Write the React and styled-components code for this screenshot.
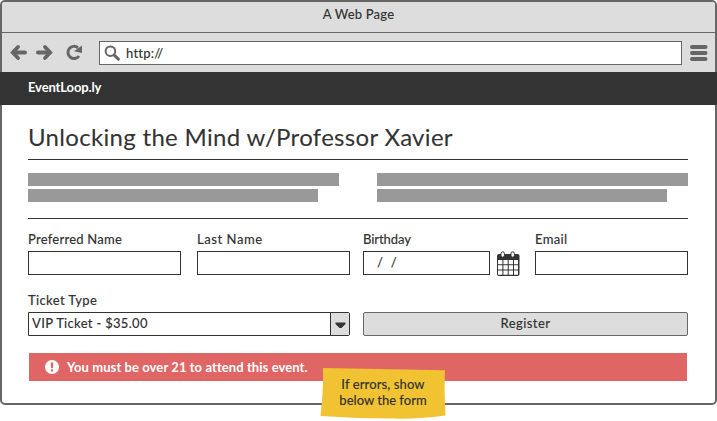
import React from "react";
import styled, { createGlobalStyle } from "styled-components";

const Global = createGlobalStyle`
  * { box-sizing: border-box; }
  body { margin: 0; background: #fff; }
`;

const Stage = styled.div`
  position: relative;
  width: 717px;
  height: 421px;
  overflow: hidden;
  color: #333;
  font: 500 13px/16px Lato, "Open Sans", sans-serif;
  -webkit-text-stroke: 0.08px currentColor;
`;

const Browser = styled.div`
  height: 405px;
  border: 2px solid #666;
  border-radius: 5px;
  background: #fff;
`;

const Text = styled.span`
  display: block;
  white-space: pre;
  letter-spacing: ${(p) => p.$spacing || 0}px;
`;

const TitleBar = styled.header`
  display: flex;
  justify-content: center;
  height: 31px;
  padding-top: 4px;
  border-bottom: 1px solid #666;
  border-radius: 3px 3px 0 0;
  background: #ddd;
`;

const Toolbar = styled.div`
  display: flex;
  align-items: flex-start;
  height: 39px;
  padding: 8px 6px 0 7px;
  background: #ddd;
`;

const Navigation = styled.svg`
  width: 90px;
  height: 24px;
  flex: none;
`;

const AddressBar = styled.div`
  display: flex;
  align-items: center;
  width: 583px;
  height: 24px;
  gap: 5px;
  padding-left: 4px;
  border: 1px solid #666;
  background: #fff;
`;

const MenuIcon = styled.svg`
  width: 19px;
  height: 24px;
  margin-left: 7px;
  flex: none;
`;

const SiteBar = styled.div`
  height: 33px;
  margin: 0 -2px;
  padding: 7px 28px;
  background: #333;
  color: #fff;
  font-weight: 700;
  -webkit-text-stroke: 0;
`;

const Page = styled.main`
  padding: 0 27px 0 26px;
`;

const Heading = styled.h1`
  height: 54px;
  margin: 0;
  padding-top: 17px;
  font-size: 24px;
  line-height: 30px;
  font-weight: 400;
  letter-spacing: 0.31px;
  white-space: nowrap;
`;

const Rule = styled.hr`
  height: 1px;
  margin: 0;
  border: 0;
  background: #333;
`;

const Summary = styled.div`
  display: grid;
  grid-template-columns: 311px 311px;
  column-gap: 38px;
  height: 58px;
  padding-top: 13px;
`;

const Paragraph = styled.div`
  display: flex;
  flex-direction: column;
  gap: 3px;
`;

const Line = styled.div`
  width: ${(p) => p.$width}px;
  height: 13px;
  background: #999;
`;

const FieldRow = styled.div`
  display: flex;
  margin-top: ${(p) => p.$top}px;
`;

const Field = styled.div`
  width: ${(p) => p.$width}px;
  margin-right: ${(p) => p.$after || 0}px;
  flex: none;
`;

const Label = styled(Text)`
  height: 20px;
`;

const Input = styled.div`
  height: 24px;
  padding: 2px 13px;
  border: 1px solid #333;
`;

const CalendarIcon = styled.svg`
  width: 24px;
  height: 26px;
  margin: 20px 15px 0 0;
  flex: none;
`;

const Select = styled.div`
  display: flex;
  justify-content: space-between;
  height: 24px;
  padding-left: 3px;
  border: 1px solid #333;
  border-radius: 0 2px 2px 0;
`;

const SelectValue = styled(Text)`
  padding-top: 2px;
`;

const Arrow = styled.span`
  display: flex;
  align-items: center;
  justify-content: center;
  width: 19px;
  padding-top: 2px;
  border-left: 1px solid #333;
  background: #ddd;
`;

const Button = styled.div`
  display: flex;
  justify-content: center;
  width: 325px;
  height: 24px;
  margin-top: 20px;
  padding-top: 2px;
  border: 1px solid #666;
  border-radius: 2px;
  background: #ddd;
`;

const Alert = styled.div`
  display: flex;
  align-items: center;
  gap: 8px;
  width: 658px;
  height: 28px;
  margin: 17px 0 0 1px;
  padding-left: 16px;
  background: #e06666;
  color: #fff;
  font-weight: 700;
  -webkit-text-stroke: 0;
`;

const Note = styled.aside`
  position: absolute;
  left: 320px;
  top: 367px;
  width: 126px;
  height: 53px;
`;

const NotePaper = styled.svg`
  position: absolute;
  inset: 0;
`;

const NoteText = styled.div`
  position: relative;
  display: flex;
  flex-direction: column;
  align-items: center;
  padding-top: 9px;
`;

const SearchIcon = () => (
  <svg width="17" height="17" viewBox="0 0 17 17" fill="none" stroke="#666">
    <circle cx="6.4" cy="6.2" r="4.8" strokeWidth="2" />
    <path d="M10.2 10.1 L14.4 14.1" strokeWidth="3" strokeLinecap="round" />
  </svg>
);

const Calendar = () => (
  <CalendarIcon viewBox="0 0 24 26">
    <rect x="1" y="3" width="22.5" height="22" rx="2" fill="#333" />
    <path
      d="M2 9h4.4v4.2h-4.4zM7.4 9h4.3v4.2h-4.3zM12.7 9h4.3v4.2h-4.3zM18 9h4v4.2h-4zM2 14.2h4.4v4.2h-4.4zM7.4 14.2h4.3v4.2h-4.3zM12.7 14.2h4.3v4.2h-4.3zM18 14.2h4v4.2h-4zM2 19.4h4.4v4.4h-4.4zM7.4 19.4h4.3v4.4h-4.3zM12.7 19.4h4.3v4.4h-4.3zM18 19.4h4v4.4h-4z"
      fill="#fff"
    />
    <rect x="5" y="0.8" width="3.4" height="5.4" rx="1.7" fill="#fff" stroke="#333" />
    <rect x="15" y="0.8" width="3.4" height="5.4" rx="1.7" fill="#fff" stroke="#333" />
  </CalendarIcon>
);

export default function App() {
  return (
    <>
      <Global />
      <Stage>
        <Browser>
          <TitleBar>
            <Text $spacing={0.2}>A Web Page</Text>
          </TitleBar>
          <Toolbar>
            <Navigation viewBox="0 0 90 24" fill="none" stroke="#666">
              <path d="M5 11.5H16" strokeWidth="4" strokeLinecap="round" />
              <path d="M9 6L3.8 11.5L9 17" strokeWidth="3.8" strokeLinecap="round" />
              <path d="M29 11.5H40" strokeWidth="4" strokeLinecap="round" />
              <path d="M36 6L41.2 11.5L36 17" strokeWidth="3.8" strokeLinecap="round" />
              <path d="M69 6.8A6.1 6.1 0 1 0 70 15" strokeWidth="3" />
              <path d="M73 4.5V12L65 10.2Z" fill="#666" stroke="none" />
            </Navigation>
            <AddressBar>
              <SearchIcon />
              <Text $spacing={0.2}>http://</Text>
            </AddressBar>
            <MenuIcon viewBox="0 0 19 24" stroke="#666" strokeWidth="4" strokeLinecap="round">
              <path d="M3 6H16.5M3 12H16.5M3 18H16.5" />
            </MenuIcon>
          </Toolbar>
          <SiteBar>
            <Text $spacing={-0.13}>EventLoop.ly</Text>
          </SiteBar>
          <Page>
            <Heading>Unlocking the Mind w/Professor Xavier</Heading>
            <Rule />
            <Summary>
              <Paragraph>
                <Line $width={311} />
                <Line $width={290} />
              </Paragraph>
              <Paragraph>
                <Line $width={311} />
                <Line $width={290} />
              </Paragraph>
            </Summary>
            <Rule />
            <FieldRow $top={12}>
              <Field $width={153} $after={16}>
                <Label $spacing={0.22}>Preferred Name</Label>
                <Input />
              </Field>
              <Field $width={153} $after={13}>
                <Label $spacing={0.55}>Last Name</Label>
                <Input />
              </Field>
              <Field $width={127} $after={6}>
                <Label $spacing={-0.1}>Birthday</Label>
                <Input><Text $spacing={0.4}>/  /</Text></Input>
              </Field>
              <Calendar />
              <Field $width={153}>
                <Label $spacing={0.3}>Email</Label>
                <Input />
              </Field>
            </FieldRow>
            <FieldRow $top={15}>
              <Field $width={322} $after={13}>
                <Label $spacing={0.35}>Ticket Type</Label>
                <Select>
                  <SelectValue $spacing={0.3}>VIP Ticket - $35.00</SelectValue>
                  <Arrow>
                    <svg width="11" height="7" viewBox="0 0 11 7">
                      <path d="M0.5 0.5H10.5V2L6.5 6H4.5L0.5 2Z" fill="#333" />
                    </svg>
                  </Arrow>
                </Select>
              </Field>
              <Button><Text $spacing={0.4}>Register</Text></Button>
            </FieldRow>
            <Alert>
              <svg width="14" height="14" viewBox="0 0 14 14">
                <circle cx="7" cy="7" r="7" fill="#fff" />
                <path d="M5.7 2.5H8.3L7.9 8.3H6.1Z" fill="#e06666" />
                <rect x="5.8" y="9.3" width="2.4" height="2.3" rx="0.7" fill="#e06666" />
              </svg>
              <Text $spacing={0.08}>You must be over 21 to attend this event.</Text>
            </Alert>
          </Page>
        </Browser>
        <Note>
          <NotePaper width="126" height="53" viewBox="0 0 126 53">
            <path
              d="M3 1L125 3.3Q124 24 125.5 48.5Q104 52 74 51.6Q38 51.5 0.5 49Q3.6 22 3 1Z"
              fill="#f1c232"
            />
          </NotePaper>
          <NoteText>
            <Text $spacing={0.1}>If errors, show</Text>
            <Text $spacing={0}>below the form</Text>
          </NoteText>
        </Note>
      </Stage>
    </>
  );
}
